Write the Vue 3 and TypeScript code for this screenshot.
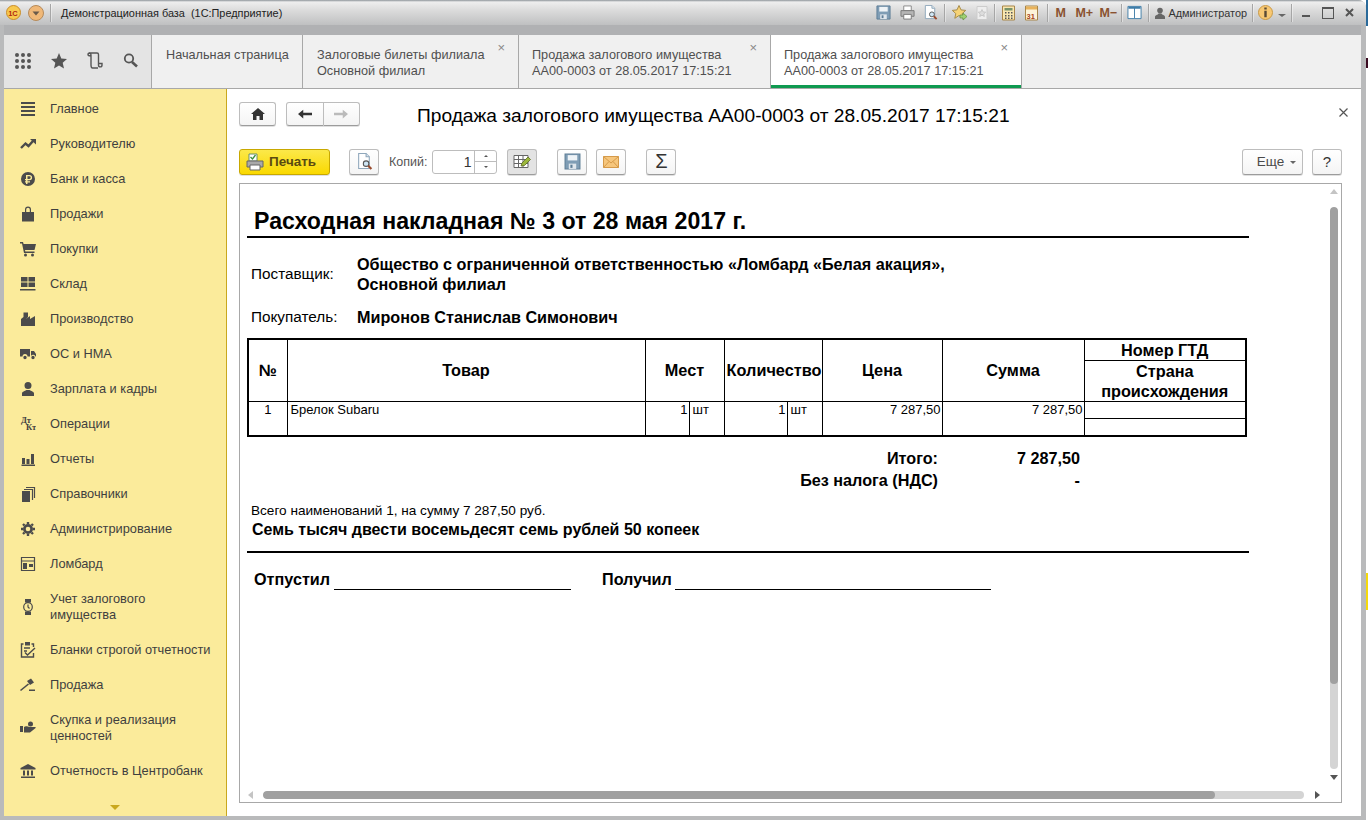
<template>
  <svg class="sprite" aria-hidden="true">
    <symbol id="i-save" viewBox="0 0 16 16">
      <path d="M1 1h14v14H1z" fill="#7f9db5" stroke="#5d7d96" />
      <path d="M3.500 2h9v5h-9z" fill="#eef3f7" />
      <path d="M4.500 10h7v5h-7z" fill="#dfe6ec" />
      <path d="M6 11h2v3H6z" fill="#5d7d96" />
    </symbol>
    <symbol id="i-preview" viewBox="0 0 16 16">
      <path d="M2.500.5h7l3 3v11h-10z" fill="#fff" stroke="#8fa7bb" />
      <path d="M9.500.5v3h3" fill="#dbe6ee" stroke="#8fa7bb" />
      <circle cx="9.500" cy="10" r="2.600" fill="#cfe6f5" stroke="#555" />
      <path d="M11.500 12l3 3" stroke="#9a4a2c" stroke-width="2" />
    </symbol>
  </svg>

  <div class="desktop">
    <div class="window">
      <header class="titlebar">
        <svg class="logo" viewBox="0 0 15 15">
          <circle cx="7.500" cy="7.500" r="7" fill="#f8c94e" stroke="#c98c2a" />
          <text x="2.200" y="10.500" class="logo__text">1C</text>
        </svg>
        <svg class="logo logo--menu" viewBox="0 0 16 16">
          <circle cx="8" cy="8" r="7.500" fill="#f0b878" stroke="#b58a5a" />
          <path d="M4.500 6.500h7L8 10.500z" fill="#6a5a4a" />
        </svg>
        <span class="sep" />
        <span class="titlebar__name">Демонстрационная база&nbsp; (1С:Предприятие)</span>

        <div class="titlebar__tools">
          <svg class="ico15"><use href="#i-save" /></svg>
          <svg class="ico15 print" viewBox="0 0 16 16">
            <path d="M4 1h8v5H4z" fill="#fff" stroke="#888" />
            <path d="M1 6h14v6H1z" fill="#b5b5b5" stroke="#777" />
            <path d="M4 10h8v5H4z" fill="#fff" stroke="#777" />
          </svg>
          <svg class="ico15"><use href="#i-preview" /></svg>
          <span class="sep" />
          <svg class="star" viewBox="0 0 16 16">
            <path d="M7 .5l2 4.400 4.700.5-3.500 3.200 1 4.700L7 10.500l-4.200 2.800 1-4.700L.3 5.400l4.700-.5z" fill="#f6d376" stroke="#a98d49" />
            <path d="M8 10h3V8l4 3.500-4 3.500v-2H8z" fill="#9fd070" stroke="#5f8f3d" stroke-width=".7" />
          </svg>
          <svg class="star star--off" viewBox="0 0 12 16">
            <path d="M1 1.500h10v13H1z" fill="#eee" stroke="#ccc" />
            <path d="M6 4.500l1.100 2.400 2.600.3-1.900 1.800.5 2.500L6 10.200l-2.300 1.300.5-2.500-1.900-1.800 2.600-.3z" fill="#ddd" stroke="#bbb" stroke-width=".7" />
          </svg>
          <span class="sep" />
          <svg class="ico13" viewBox="0 0 13 16">
            <path d="M.5 1h12v14H.5z" fill="#f8e6b0" stroke="#a8864a" />
            <path d="M2.500 3h8v2.500h-8z" fill="#77936a" />
            <path d="M3 7h1.500v1.500H3zM6 7h1.500v1.500H6zM9 7h1.500v1.500H9zM3 10h1.500v1.500H3zM6 10h1.500v1.500H6zM9 10h1.500v1.500H9zM3 12.600h1.500v1.400H3zM6 12.600h1.500v1.400H6zM9 12.600h1.500v1.400H9z" fill="#555" />
          </svg>
          <svg class="ico13 cal" viewBox="0 0 13 16">
            <path d="M.5 1h12v14H.5z" fill="#fdf4d8" stroke="#a8864a" />
            <path d="M1 1.500h11v3H1z" fill="#e9b35c" />
            <text x="1.600" y="13.500" class="cal__text">31</text>
          </svg>
          <span class="sep" />
          <span class="mem mem--m">M</span>
          <span class="mem">M+</span>
          <span class="mem mem--minus">M−</span>
          <span class="sep" />
          <svg class="ico15 panel" viewBox="0 0 15 16">
            <path d="M.5 1.500h14v13H.5z" fill="#fff" stroke="#3f7da8" />
            <path d="M1 2h13v2H1z" fill="#3f7da8" />
            <path d="M7.500 3v11" stroke="#3f7da8" />
          </svg>
          <span class="sep" />
          <svg class="user" viewBox="0 0 10 12">
            <circle cx="5" cy="3.600" r="2.800" fill="#666" />
            <path d="M0 12V10c0-2 3-2 3.500-3.500h3C7 8 10 8 10 10v2z" fill="#666" />
          </svg>
          <span class="titlebar__user">Администратор</span>
          <span class="sep" />
          <svg class="info" viewBox="0 0 15 15">
            <circle cx="7.500" cy="7.500" r="7" fill="#f8c873" stroke="#c89a4a" />
            <path d="M6.300 2.500h2.400v2H6.300zM6.300 5.700h2.400v6.600H6.300z" fill="#5a4a35" />
          </svg>
          <span class="caret caret--title" />
          <span class="sep" />
          <span class="win-btn win-btn--min" />
          <span class="win-btn win-btn--max" />
          <svg class="win-btn--close" viewBox="0 0 9 9"><path d="M1 1l7 7M8 1L1 8" stroke="#555" stroke-width="2" /></svg>
        </div>
      </header>
      <div class="strip" />

      <nav class="tabs">
        <div class="tabs__icons">
          <svg class="tab-ico" viewBox="0 0 18 18">
            <g fill="#555">
              <circle v-for="c in dots" :key="c[0] + '-' + c[1]" :cx="c[0]" :cy="c[1]" r="2" />
            </g>
          </svg>
          <svg class="tab-ico" viewBox="0 0 18 18">
            <path d="M9 1l2.300 5.400 5.700.5-4.300 3.800 1.300 5.800L9 13.500l-5 3 1.300-5.800L1 6.900l5.700-.5z" fill="#555" />
          </svg>
          <svg class="tab-ico" viewBox="0 0 18 18">
            <path d="M2 2.500c0-1 .8-1.500 1.500-1.500h7.500c1 0 1.500 .7 1.500 1.500v10.500c0 2.500 3.500 2.500 3.500 0V11.500h-3M12 16H6.500C5 16 5 14 5 13V3C5 1.500 4 1 3 1M2 2.500c0 1.200 .8 1.500 3 1.500" fill="none" stroke="#555" stroke-width="1.400" />
          </svg>
          <svg class="tab-ico" viewBox="0 0 18 18">
            <circle cx="7" cy="6.500" r="4.200" fill="none" stroke="#555" stroke-width="1.800" />
            <path d="M10 10l5 4.500" stroke="#555" stroke-width="2.600" />
          </svg>
        </div>
        <div
          v-for="tab in tabs"
          :key="tab.cls"
          class="tab"
          :class="[tab.cls, { 'tab--active': tab.active }]"
        >
          <div>{{ tab.line1 }}</div>
          <div>{{ tab.line2 }}</div>
          <span v-if="tab.closable" class="tab__close">×</span>
        </div>
        <div class="tabs__rest" />
      </nav>

      <div class="body">
        <aside class="side">
          <a v-for="item in menu" :key="item.label" class="side__item" :class="{ 'side__item--tall': item.tall }">
            <svg class="side__ico" viewBox="0 0 16 16">
              <text v-if="item.label === 'Операции'" class="dtkt">
                <tspan x="1" y="6.500">Дт</tspan>
                <tspan x="6" y="14">Кт</tspan>
              </text>
              <path v-if="item.d" :d="item.d" fill="#4b4b4b" fill-rule="evenodd" />
              <path v-if="item.s" :d="item.s" fill="none" stroke="#4b4b4b" :stroke-width="item.w || 1.200" />
            </svg>
            <span class="side__label">{{ item.label }}</span>
          </a>
          <span class="side__more" />
        </aside>

        <main class="page">
          <div class="page__head">
            <button class="btn btn--home">
              <svg viewBox="0 0 14 12" class="nav-ico"><path d="M7 0l7 6h-2v6H8.500V8h-3v4H2V6H0z" fill="#333" /></svg>
            </button>
            <div class="nav-group">
              <button class="btn nav-group__btn">
                <svg viewBox="0 0 16 12" class="nav-ico"><path d="M0 6l6-5v3.500h10v3H6V11z" fill="#333" /></svg>
              </button>
              <button class="btn nav-group__btn">
                <svg viewBox="0 0 16 12" class="nav-ico"><path d="M16 6l-6-5v3.500H0v3h10V11z" fill="#bbb" /></svg>
              </button>
            </div>
            <h1 class="page__title">Продажа залогового имущества АА00-0003 от 28.05.2017 17:15:21</h1>
            <svg class="page__close" viewBox="0 0 9 9"><path d="M.5.500l8 8M8.500.500l-8 8" stroke="#555" stroke-width="1.200" /></svg>
          </div>

          <div class="toolbar">
            <button class="btn btn--print">
              <svg viewBox="0 0 18 18" class="print-ico">
                <path d="M3 1h8v7H3z" fill="#fff" stroke="#6a8f6a" />
                <path d="M4.500 4l2 2 3-4" fill="none" stroke="#3d8f3d" stroke-width="1.300" />
                <path d="M1 8h16v6H1z" fill="#a9a9a9" stroke="#666" />
                <path d="M4 12h10v5H4z" fill="#fff" stroke="#666" />
              </svg>
              Печать
            </button>
            <button class="btn btn--tool btn--preview"><svg class="ico17"><use href="#i-preview" /></svg></button>
            <label class="copies">Копий:</label>
            <div class="spin">
              <span class="spin__value">1</span>
              <div class="spin__arrows">
                <span class="spin__up" />
                <span class="spin__down" />
              </div>
            </div>
            <button class="btn btn--tool btn--on">
              <svg viewBox="0 0 18 16" class="edit-ico">
                <path d="M1 1.500h14v12H1zM1 5.500h14M1 9.500h14M5.500 1.500v12M10 1.500v12" fill="#fff" stroke="#666" />
                <path d="M8 12l1-3 6-6 2.500 2.500-6 6z" fill="#9cb83c" stroke="#5c6b22" stroke-width=".8" />
              </svg>
            </button>
            <button class="btn btn--tool btn--save"><svg class="ico17"><use href="#i-save" /></svg></button>
            <button class="btn btn--tool btn--mail">
              <svg viewBox="0 0 16 12" class="mail-ico">
                <path d="M.5.500h15v11H.5z" fill="#f6c67c" stroke="#d59a4a" />
                <path d="M.5.500L8 7l7.500-6.500M.5 11.500L6 5.500M15.500 11.500L10 5.500" fill="none" stroke="#d59a4a" />
              </svg>
            </button>
            <button class="btn btn--tool btn--sum">Σ</button>
            <button class="btn btn--more">Еще <span class="caret caret--small" /></button>
            <button class="btn btn--help">?</button>
          </div>

          <section class="sheet">
            <div class="doc">
              <h2 class="doc__title">Расходная накладная № 3 от 28 мая 2017 г.</h2>

              <div class="party party--first">
                <span class="party__label">Поставщик:</span>
                <strong class="party__value">Общество с ограниченной ответственностью «Ломбард «Белая акация»,<br />Основной филиал</strong>
              </div>
              <div class="party party--second">
                <span class="party__label">Покупатель:</span>
                <strong class="party__value">Миронов Станислав Симонович</strong>
              </div>

              <table class="goods">
                <colgroup>
                  <col v-for="w in colWidths" :key="w.id" :style="{ width: w.px + 'px' }" />
                </colgroup>
                <thead>
                  <tr class="goods__h1">
                    <th rowspan="2">№</th>
                    <th rowspan="2">Товар</th>
                    <th rowspan="2" colspan="2">Мест</th>
                    <th rowspan="2" colspan="2" class="goods__nopad">Количество</th>
                    <th rowspan="2">Цена</th>
                    <th rowspan="2">Сумма</th>
                    <th>Номер ГТД</th>
                  </tr>
                  <tr class="goods__h2">
                    <th>Страна происхождения</th>
                  </tr>
                </thead>
                <tbody>
                  <tr class="goods__r1">
                    <td rowspan="2" class="c">1</td>
                    <td rowspan="2">Брелок Subaru</td>
                    <td rowspan="2" class="r">1</td>
                    <td rowspan="2">шт</td>
                    <td rowspan="2" class="r">1</td>
                    <td rowspan="2">шт</td>
                    <td rowspan="2" class="r">7 287,50</td>
                    <td rowspan="2" class="r">7 287,50</td>
                    <td />
                  </tr>
                  <tr class="goods__r2"><td /></tr>
                </tbody>
              </table>

              <div class="total total--first"><span class="total__label">Итого:</span><span class="total__value">7 287,50</span></div>
              <div class="total"><span class="total__label">Без налога (НДС)</span><span class="total__value">-</span></div>

              <p class="doc__count">Всего наименований 1, на сумму 7 287,50 руб.</p>
              <p class="doc__words">Семь тысяч двести восемьдесят семь рублей 50 копеек</p>

              <div class="sign">
                <span class="sign__label">Отпустил</span>
                <span class="sign__line sign__line--a" />
                <span class="sign__label sign__label--b">Получил</span>
                <span class="sign__line sign__line--b" />
              </div>
            </div>

            <span class="arrow arrow--up" />
            <div class="vbar"><div class="vbar__thumb" /></div>
            <span class="arrow arrow--down" />
            <span class="arrow arrow--left" />
            <div class="hbar"><div class="hbar__thumb" /></div>
            <span class="arrow arrow--right" />
          </section>
        </main>
      </div>
      <div class="window__foot" />
    </div>
    <div class="behind" />
  </div>
</template>

<script setup lang="ts">
interface MenuItem {
  label: string
  d?: string
  s?: string
  w?: number
  tall?: boolean
}

const dots: number[][] = []
for (const y of [3, 9, 15]) {
  for (const x of [3, 9, 15]) dots.push([x, y])
}

const tabs = [
  { cls: 'tab--home', line1: 'Начальная страница', line2: '', closable: false, active: false },
  { cls: 'tab--a', line1: 'Залоговые билеты филиала', line2: 'Основной филиал', closable: true, active: false },
  { cls: 'tab--b', line1: 'Продажа залогового имущества', line2: 'АА00-0003 от 28.05.2017 17:15:21', closable: true, active: false },
  { cls: 'tab--c', line1: 'Продажа залогового имущества', line2: 'АА00-0003 от 28.05.2017 17:15:21', closable: true, active: true },
]

const colWidths = [39, 358, 44, 35, 63, 35, 120, 142, 162].map((px, id) => ({ id, px }))

const menu: MenuItem[] = [
  { label: 'Главное', d: 'M1 1h14v2H1zM1 5h14v2H1zM1 9h14v2H1zM1 13h14v2H1z' },
  { label: 'Руководителю', s: 'M1 12l4.500-4.500 3 2.500 4.500-5', w: 2.400, d: 'M10 3h6v5.500z' },
  { label: 'Банк и касса', d: 'M8 1a7 7 0 1 0 0 14A7 7 0 0 0 8 1zM6 4h3.500a2.600 2.600 0 0 1 0 5.200H7.500v1H10v1.200H7.500V13H6v-1.600H5v-1.200h1v-1H5V8h1zM7.500 5.200V8h1.800a1.400 1.400 0 0 0 0-2.800z' },
  { label: 'Продажи', d: 'M2 6h3V3.500a3 3 0 0 1 6 0V6h3v9.500H2zM6.200 6h3.600V3.500a1.800 1.800 0 0 0-3.600 0z' },
  { label: 'Покупки', d: 'M0 1h3l.6 2H16l-1.500 6H5l.3 1.500h9.200V12H4L2 2.500H0zM4 14a1.500 1.500 0 1 0 3 0 1.500 1.500 0 0 0-3 0zM11 14a1.500 1.500 0 1 0 3 0 1.500 1.500 0 0 0-3 0z' },
  { label: 'Склад', d: 'M1 1h6.500v4.500H1zM8.500 1H15v4.500H8.500zM1 6.500h6.500V11H1zM8.500 6.500H15V11H8.500zM0 13h15.500v1.500H0z' },
  { label: 'Производство', d: 'M1 15V8l2.500-2V1.500H8V6L6 8l4-3v3l5-3v10z' },
  { label: 'ОС и НМА', d: 'M0 3h10v7.500H7.500a2.500 2.500 0 0 0-5 0H0zM11 5h3l2 3v2.500h-.5a2.500 2.500 0 0 0-4.500-.5zM3.300 11.500a1.700 1.700 0 1 0 3.400 0 1.700 1.700 0 0 0-3.400 0zM11.300 11.500a1.700 1.700 0 1 0 3.400 0 1.700 1.700 0 0 0-3.400 0z' },
  { label: 'Зарплата и кадры', d: 'M4.500 4.500a3.500 3.500 0 1 0 7 0 3.500 3.500 0 0 0-7 0zM2 15v-2.500C2 10.500 5 10 6.500 9h3c1.500 1 4.500 1.500 4.500 3.500V15z' },
  { label: 'Операции' },
  { label: 'Отчеты', d: 'M2 7h3v6H2zM6.500 8h3v5h-3zM11 3h3v10h-3zM1.500 13.500H15V15H1.500z' },
  { label: 'Справочники', d: 'M2 5h8v11H2z', s: 'M4 3.500h8.500V14M6 1.500h8.500V12' },
  { label: 'Администрирование', d: 'M8 3a5 5 0 1 0 0 10A5 5 0 0 0 8 3zM8 5.700a2.300 2.300 0 1 1 0 4.600 2.300 2.300 0 0 1 0-4.600z', s: 'M8 1v2M8 13v2M1 8h2M13 8h2M3 3l1.500 1.500M11.500 11.500 13 13M13 3l-1.500 1.500M4.500 11.500 3 13', w: 2.400 },
  { label: 'Ломбард', d: 'M3 7h4v6H3zM9 8h4v3H9z', s: 'M1.500 1.500h13v13h-13zM1.500 5h13' },
  { label: 'Учет залогового\nимущества', tall: true, d: 'M5 0h6v3.500H5zM5 12.500h6V16H5z', s: 'M12.300 8a4.300 4.300 0 1 1-8.600 0 4.300 4.300 0 0 1 8.600 0zM8 5.500V8l1.500 1.500' },
  { label: 'Бланки строгой отчетности', d: 'M5 0h5v3.500H5z', s: 'M3.500 2H1.500v13h12V11M11.500 2h2v3M4 6h6M4 9h3M5 10.500l2.500 2.500L15 6', w: 1.400 },
  { label: 'Продажа', d: 'M7 4l4-2.500 3 4-4 2.500zM9 12.500h6V14H9z', s: 'M0.500 13.500L8.500 7', w: 1.600 },
  { label: 'Скупка и реализация\nценностей', tall: true, d: 'M0 6h3v6H0zM4 7c2-1.500 4 0 5.500 0h5.500c1 0 1 1 0 1.500L10 12.500H4zM8 4a2.500 2.500 0 1 0 5 0 2.500 2.500 0 0 0-5 0z' },
  { label: 'Отчетность в Центробанк', d: 'M8 1L.5 5v1.500h15V5zM3 7.500h2v5H3zM7 7.500h2v5H7zM11 7.500h2v5h-2zM1 13.500h14V15H1z' },
]
</script>

<style scoped>
.sprite {
  position: absolute;
  width: 0;
  height: 0;
}

.desktop {
  width: 1368px;
  height: 820px;
  display: flex;
  overflow: hidden;
}

.behind {
  width: 2px;
  flex: none;
  background: linear-gradient(180deg, #2a6a9a 0 26px, #ffffff 26px 58px, #3a0a20 58px 68px, #ffffff 68px 573px, #f5d90a 573px 610px, #ffffff 610px);
}

.window {
  width: 1366px;
  height: 820px;
  flex: none;
  display: flex;
  flex-direction: column;
  background: #b9babb;
  border-radius: 0 8px 0 0;
  overflow: hidden;
  font-family: "Liberation Sans", Arial, sans-serif;
}

.titlebar {
  height: 25px;
  flex: none;
  display: flex;
  align-items: center;
  padding-left: 6px;
  background: linear-gradient(180deg, #8d9499 0, #eeeeee 2px, #dcdcdc 10px, #bfc0c1 25px);
}

.logo {
  width: 15px;
  height: 15px;
  flex: none;
}

.logo__text {
  font: bold 7.500px "Liberation Sans", sans-serif;
  fill: #b02a10;
}

.logo--menu {
  width: 16px;
  height: 16px;
  margin-left: 7px;
}

.sep {
  width: 1px;
  height: 18px;
  flex: none;
  margin: 0 6px;
  background: #a6a6a6;
  box-shadow: 1px 0 0 rgba(255, 255, 255, 0.4);
}

.titlebar__name {
  margin-left: 4px;
  font-size: 10.900px;
  white-space: nowrap;
  color: #222;
}

.titlebar__tools {
  margin-left: auto;
  padding-right: 12px;
  display: flex;
  align-items: center;
  gap: 8px;
}

.titlebar__tools .sep {
  margin: 0 -1px 0 -2px;
}

.ico15 {
  width: 15px;
  height: 15px;
  flex: none;
}

.ico17 {
  width: 17px;
  height: 17px;
  flex: none;
}

.ico13 {
  width: 13px;
  height: 16px;
  flex: none;
}

.print {
  margin-left: 1px;
}

.cal {
  margin: 0 3px 0 2px;
}

.cal__text {
  font: bold 7.500px "Liberation Sans", sans-serif;
  fill: #a8461c;
}

.star {
  width: 16px;
  height: 16px;
  flex: none;
}

.star--off {
  width: 12px;
}

.mem {
  width: 16px;
  font-size: 12.500px;
  font-weight: 700;
  color: #8a5230;
  white-space: nowrap;
}

.mem--m {
  width: 12px;
}

.panel {
  margin-left: -2px;
}

.user {
  width: 10px;
  height: 12px;
  flex: none;
  margin: 0 -5px 0 -1px;
}

.titlebar__user {
  margin-right: -1px;
  font-size: 10.900px;
  color: #333;
  white-space: nowrap;
}

.info {
  width: 15px;
  height: 15px;
  flex: none;
  margin-left: -2px;
}

.caret {
  width: 0;
  height: 0;
  display: inline-block;
  border-left: 4px solid transparent;
  border-right: 4px solid transparent;
  border-top: 3px solid #666;
  margin-top: 6px;
}

.caret--title {
  margin-left: -3px;
  margin-right: -1px;
}

.win-btn {
  display: block;
  flex: none;
}

.win-btn--min {
  width: 8px;
  height: 2px;
  background: #555;
  margin: 7px 0 0 3px;
}

.win-btn--max {
  width: 12px;
  height: 12px;
  border: 1px solid #555;
  border-top-width: 2px;
  box-sizing: border-box;
  margin-left: 4px;
}

.win-btn--close {
  width: 9px;
  height: 9px;
  flex: none;
  margin-left: 3px;
}

.strip {
  height: 10px;
  flex: none;
  margin: 0 5px 0 4px;
  background: #b0b1b3;
}

.tabs {
  height: 54px;
  flex: none;
  display: flex;
  margin: 0 5px 0 4px;
  border-bottom: 1px solid #a8a8a8;
  box-sizing: border-box;
  background: #f0f0f0;
}

.tabs__icons {
  width: 148px;
  flex: none;
  display: flex;
  align-items: center;
  padding: 0 0 0 10px;
  gap: 19px;
  box-sizing: border-box;
  background: #e4e4e4;
  border-right: 1px solid #a8a8a8;
}

.tab-ico {
  width: 18px;
  height: 18px;
  flex: none;
  margin-top: -1px;
  margin-right: -1px;
}

.tab {
  position: relative;
  flex: none;
  box-sizing: border-box;
  padding: 12px 0 0 14px;
  font-size: 12.700px;
  line-height: 16px;
  color: #4f4f4f;
  white-space: nowrap;
  border-right: 1px solid #a8a8a8;
}

.tab--home {
  width: 151px;
}

.tab--a {
  width: 216px;
}

.tab--b {
  width: 252px;
  padding-left: 13px;
}

.tab--c {
  width: 251px;
  padding-left: 13px;
}

.tab--active {
  background: #fff;
  box-shadow: inset 0 -3px 0 #0f9a50;
}

.tab__close {
  position: absolute;
  top: 6px;
  right: 13px;
  font-size: 13px;
  line-height: 14px;
  color: #888;
}

.tabs__rest {
  flex: 1;
}

.body {
  flex: 1;
  min-height: 0;
  display: flex;
  margin: 0 5px 0 4px;
}

.side {
  width: 223px;
  flex: none;
  display: flex;
  flex-direction: column;
  box-sizing: border-box;
  padding-top: 2px;
  background: #fbeb9b;
  border-right: 1px solid #c9a81e;
  font-size: 12.800px;
  line-height: 16px;
  color: #3f3f3f;
  position: relative;
}

.side__item {
  height: 35px;
  flex: none;
  display: flex;
  align-items: center;
  padding-left: 16px;
}

.side__item--tall {
  height: 51px;
}

.side__ico {
  width: 16px;
  height: 16px;
  flex: none;
}

.side__label {
  margin-left: 14px;
  white-space: pre-line;
}

.dtkt {
  font: bold 8.500px "Liberation Serif", serif;
  fill: #3f3f3f;
}

.side__more {
  position: absolute;
  left: 106px;
  bottom: 6px;
  width: 0;
  height: 0;
  border-left: 5px solid transparent;
  border-right: 5px solid transparent;
  border-top: 5px solid #c9a81e;
}

.page {
  flex: 1;
  min-width: 0;
  display: flex;
  flex-direction: column;
  padding: 13px 19px 13px 12px;
  box-sizing: border-box;
  background: #fff;
}

.page__head {
  height: 24px;
  flex: none;
  display: flex;
  align-items: center;
}

.btn {
  box-sizing: border-box;
  display: flex;
  align-items: center;
  justify-content: center;
  padding: 0;
  border: 1px solid #bdbdbd;
  border-bottom-color: #9c9c9c;
  border-radius: 3px;
  background: linear-gradient(180deg, #ffffff 0, #f4f4f4 100%);
  box-shadow: 0 1px 0 rgba(0, 0, 0, 0.12);
  font-family: inherit;
  color: #4a4a4a;
}

.btn--home {
  width: 37px;
  height: 24px;
}

.nav-ico {
  width: 14px;
  height: 12px;
}

.nav-group {
  width: 74px;
  height: 24px;
  margin-left: 10px;
  display: flex;
}

.nav-group__btn {
  flex: 1;
}

.nav-group__btn:first-child {
  border-radius: 3px 0 0 3px;
}

.nav-group__btn:last-child {
  border-radius: 0 3px 3px 0;
  border-left: 0;
}

.page__title {
  margin: 4px 0 0 57px;
  font-size: 19.170px;
  font-weight: 400;
  color: #000;
  white-space: nowrap;
}

.page__close {
  width: 9px;
  height: 9px;
  margin: -4px -6px 0 auto;
}

.toolbar {
  height: 27px;
  flex: none;
  margin-top: 22px;
  display: flex;
  align-items: center;
}

.btn--print {
  width: 91px;
  height: 26px;
  justify-content: flex-start;
  padding-left: 6px;
  gap: 5px;
  font-size: 13.500px;
  font-weight: 700;
  color: #5a4a10;
  border-color: #c8a800;
  background: linear-gradient(180deg, #fbe84a 0, #fad900 100%);
}

.print-ico {
  width: 18px;
  height: 18px;
}

.btn--tool {
  width: 30px;
  height: 26px;
  flex: none;
}

.btn--preview {
  margin-left: 19px;
}

.copies {
  margin-left: 10px;
  font-size: 12.500px;
  color: #555;
}

.spin {
  width: 65px;
  height: 24px;
  margin-left: 5px;
  box-sizing: border-box;
  display: flex;
  border: 1px solid #bdbdbd;
  border-radius: 3px;
}

.spin__value {
  flex: 1;
  text-align: right;
  padding-right: 3px;
  font-size: 14px;
  line-height: 22px;
  color: #333;
}

.spin__arrows {
  width: 21px;
  display: flex;
  flex-direction: column;
  border-left: 1px solid #bdbdbd;
}

.spin__up,
.spin__down {
  flex: 1;
  display: flex;
  align-items: center;
  justify-content: center;
}

.spin__up {
  border-bottom: 1px solid #bdbdbd;
}

.spin__up::before,
.spin__down::before {
  content: "";
  border-left: 2px solid transparent;
  border-right: 2px solid transparent;
}

.spin__up::before {
  border-bottom: 2px solid #555;
}

.spin__down::before {
  border-top: 2px solid #555;
}

.btn--on {
  margin-left: 10px;
  background: #e3e3e3;
}

.edit-ico {
  width: 18px;
  height: 16px;
}

.btn--save {
  margin-left: 20px;
}

.btn--mail {
  margin-left: 9px;
}

.mail-ico {
  width: 16px;
  height: 12px;
}

.btn--sum {
  margin-left: 20px;
  font-size: 20px;
  color: #333;
}

.btn--more {
  width: 61px;
  height: 26px;
  margin-left: auto;
  gap: 6px;
  font-size: 13.500px;
  padding-left: 8px;
}

.caret--small {
  margin-top: 1px;
  border-left-width: 3px;
  border-right-width: 3px;
}

.btn--help {
  width: 30px;
  height: 26px;
  margin-left: 9px;
  font-size: 15px;
  color: #333;
}

.sheet {
  position: relative;
  flex: 1;
  min-height: 0;
  margin-top: 8px;
  border: 1px solid #a8a8a8;
  overflow: hidden;
}

.doc {
  width: 1002px;
  margin-left: 7px;
  color: #000;
}

.doc__title {
  height: 28px;
  margin: 0;
  padding: 24px 0 0 7px;
  font-size: 23.150px;
  line-height: 26px;
  font-weight: 700;
  border-bottom: 2px solid #000;
  white-space: nowrap;
}

.party {
  display: flex;
  align-items: center;
  padding-left: 4px;
  font-size: 15.300px;
  line-height: 20px;
}

.party--first {
  margin-top: 16px;
}

.party--second {
  margin-top: 13px;
}

.party__label {
  width: 106px;
  flex: none;
}

.party__value {
  font-size: 16.200px;
  font-weight: 700;
}

.goods {
  width: 998px;
  margin-top: 11px;
  table-layout: fixed;
  border-collapse: collapse;
  border: 2px solid #000;
  font-size: 13px;
  line-height: 14px;
}

.goods th,
.goods td {
  border: 1px solid #000;
  padding: 1px 1px 0 3px;
  overflow: hidden;
}

.goods th {
  padding: 0 2px;
  font-size: 16.300px;
  line-height: 20px;
  font-weight: 700;
}

.goods th[rowspan] {
  padding-bottom: 2px;
}

.goods td {
  vertical-align: top;
}

.goods .goods__nopad {
  padding: 0 0 2px 2px;
}

.goods__h1 {
  height: 20px;
}

.goods__h2 {
  height: 41px;
}

.goods__r1 {
  height: 17px;
}

.goods__r2 {
  height: 17px;
}

.goods td.c {
  padding: 1px 2px 0;
  text-align: center;
}

.r {
  text-align: right;
}

.total {
  height: 22px;
  display: flex;
  font-size: 16.200px;
  line-height: 22px;
  font-weight: 700;
}

.total--first {
  margin-top: 10px;
}

.total__label {
  width: 691px;
  text-align: right;
  white-space: nowrap;
}

.total__value {
  width: 142px;
  text-align: right;
}

.doc__count {
  margin: 13px 0 0 4px;
  font-size: 13.600px;
  line-height: 14px;
  white-space: nowrap;
}

.doc__words {
  margin: 3px 0 0;
  padding: 0 0 12px 5px;
  font-size: 16px;
  line-height: 18px;
  font-weight: 700;
  border-bottom: 2px solid #000;
  white-space: nowrap;
}

.sign {
  display: flex;
  align-items: flex-end;
  height: 20px;
  margin-top: 17px;
  padding-left: 7px;
  font-size: 16.200px;
  line-height: 20px;
  font-weight: 700;
}

.sign__label {
  width: 80px;
  flex: none;
  margin-bottom: 1px;
}

.sign__label--b {
  width: 73px;
  margin-left: 31px;
}

.sign__line {
  height: 1px;
  background: #000;
}

.sign__line--a {
  width: 237px;
}

.sign__line--b {
  width: 316px;
}

.vbar {
  position: absolute;
  top: 23px;
  bottom: 33px;
  right: 3px;
  width: 8px;
  border-radius: 4px;
  background: #d4d4d4;
  overflow: hidden;
}

.vbar__thumb {
  height: 477px;
  border-radius: 4px;
  background: #a0a0a0;
}

.hbar {
  position: absolute;
  left: 23px;
  bottom: 3px;
  width: 1041px;
  height: 8px;
  border-radius: 4px;
  background: #d4d4d4;
  overflow: hidden;
}

.hbar__thumb {
  width: 952px;
  height: 8px;
  border-radius: 4px;
  background: #a0a0a0;
}

.arrow {
  position: absolute;
  width: 0;
  height: 0;
  border: 4px solid transparent;
}

.arrow--up {
  top: 5px;
  right: 3px;
  border-top: 0;
  border-bottom: 5px solid #c4c4c4;
}

.arrow--down {
  bottom: 22px;
  right: 3px;
  border-bottom: 0;
  border-top: 5px solid #555;
}

.arrow--left {
  bottom: 3px;
  left: 8px;
  border-left: 0;
  border-right: 5px solid #c4c4c4;
}

.arrow--right {
  bottom: 3px;
  left: 1075px;
  border-right: 0;
  border-left: 5px solid #555;
}

.window__foot {
  height: 4px;
  flex: none;
}
</style>

<style>
html,
body {
  margin: 0;
  background: #fff;
  overflow: hidden;
}
</style>
